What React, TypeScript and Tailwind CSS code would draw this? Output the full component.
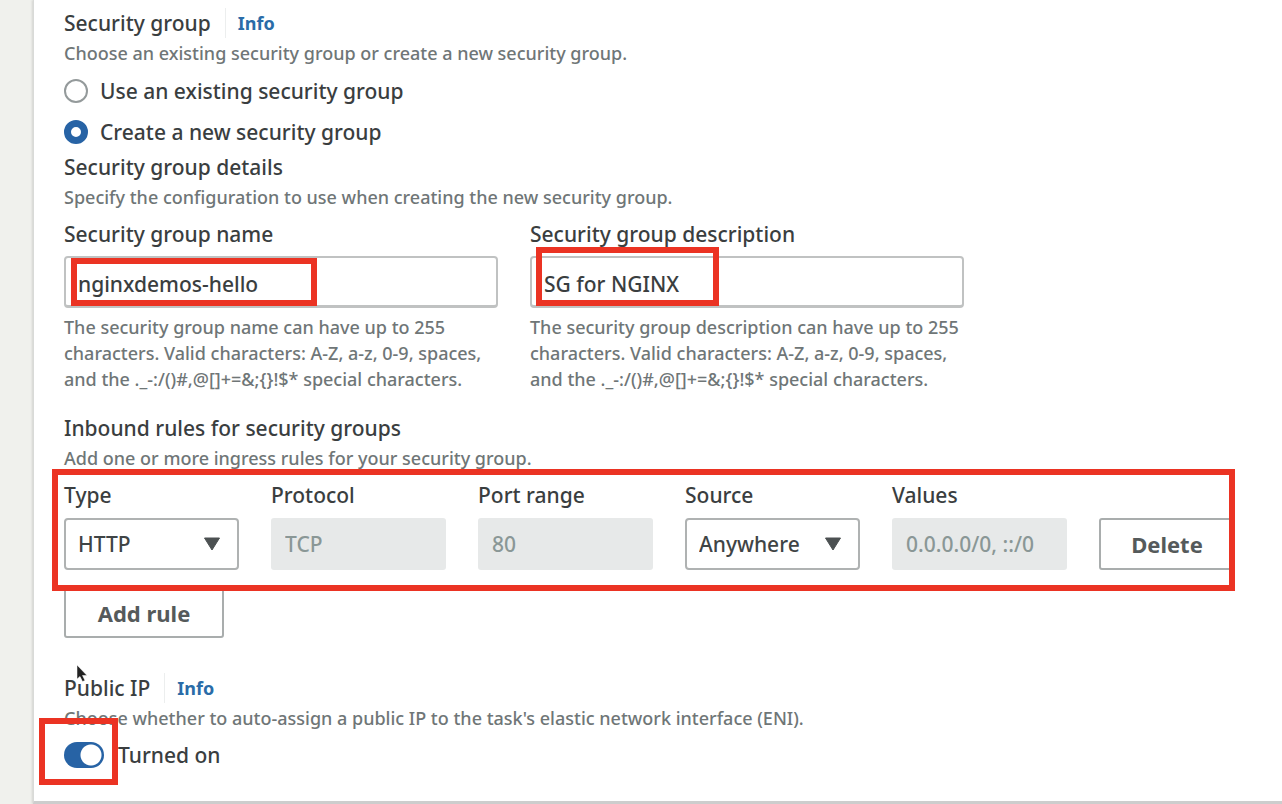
import { ReactNode, useState } from "react";

function Highlight({ className }: { className: string }) {
  return (
    <span
      aria-hidden="true"
      className={`pointer-events-none absolute z-10 border-6 border-[#eb3323] ${className}`}
    />
  );
}

function Hint({ children }: { children: ReactNode }) {
  return <p className="text-[18px] leading-[30px] text-[#6f7677]">{children}</p>;
}

function TitleWithInfo({ children }: { children: ReactNode }) {
  return (
    <div className="flex h-[30px] items-center">
      <h3>{children}</h3>
      <span className="ml-3.5 h-[30px] w-px bg-[#eceeee]" />
      <a href="#info" className="ml-3 text-[18px] font-bold text-[#2a6ca8]">
        Info
      </a>
    </div>
  );
}

function RadioOption({
  label,
  checked,
  onSelect,
}: {
  label: string;
  checked: boolean;
  onSelect: () => void;
}) {
  return (
    <label className="flex h-[30px] items-center gap-3">
      <input
        type="radio"
        name="security-group-mode"
        checked={checked}
        onChange={onSelect}
        className="size-6 shrink-0 appearance-none rounded-full border-2 border-[#949a9b] bg-white checked:border-7 checked:border-[#2763a5]"
      />
      {label}
    </label>
  );
}

function TextField({
  id,
  label,
  value,
  help,
  highlight,
}: {
  id: string;
  label: string;
  value: string;
  help: string;
  highlight: string;
}) {
  return (
    <div>
      <label htmlFor={id} className="block">
        {label}
      </label>
      <div className="relative mt-[7px]">
        <input
          id={id}
          type="text"
          defaultValue={value}
          className="block h-[52px] w-full rounded-[4px] border-2 border-b-3 border-[#c0c2c2] bg-white px-3 pt-1"
        />
        <Highlight className={highlight} />
      </div>
      <p className="mt-1.5 text-[18px] leading-[26px] text-[#6f7677]">
        {help}
        <br />
        characters. Valid characters: A-Z, a-z, 0-9, spaces,
        <br />
        and the ._-:/()#,@[]+=&amp;;{"{}"}!$* special characters.
      </p>
    </div>
  );
}

function RuleSelect({ id, label, options }: { id: string; label: string; options: string[] }) {
  return (
    <div>
      <label htmlFor={id} className="block">
        {label}
      </label>
      <div className="relative mt-2">
        <select
          id={id}
          className="block h-[52px] w-full appearance-none rounded-[4px] border-2 border-[#afb2b2] bg-white px-3 text-[#3f4445]"
        >
          {options.map((o) => (
            <option key={o}>{o}</option>
          ))}
        </select>
        <svg
          viewBox="0 0 18 14"
          className="pointer-events-none absolute top-[19px] right-[18px] h-3.5 w-[18px]"
          aria-hidden="true"
        >
          <path d="M1.5 1h15L9 13Z" fill="#4c5152" stroke="#4c5152" strokeLinejoin="round" />
        </svg>
      </div>
    </div>
  );
}

function RuleDisabled({ id, label, value }: { id: string; label: string; value: string }) {
  return (
    <div>
      <label htmlFor={id} className="block">
        {label}
      </label>
      <input
        id={id}
        type="text"
        disabled
        value={value}
        className="mt-2 block h-[52px] w-full rounded-[3px] bg-[#e7e9e9] px-3.5 text-[#8a9796]"
      />
    </div>
  );
}

export default function App() {
  const [mode, setMode] = useState("new");
  const [publicIp, setPublicIp] = useState(true);

  return (
    <div className="min-h-screen bg-[#f0f1ed] pl-[33px] font-['Noto_Sans',sans-serif] text-[21px] leading-[30px] font-medium text-[#3a3e3f]">
      <main className="border-b-3 border-l border-b-[#cdcdcd] border-l-[#d9dad8] bg-white pt-2 pr-[47px] pb-[31px] pl-[30px] shadow-[-1px_0_2px_#d3d4d0]">
        <section>
          <TitleWithInfo>Security group</TitleWithInfo>
          <Hint>Choose an existing security group or create a new security group.</Hint>
          <div className="mt-2 flex flex-col gap-[11px]">
            <RadioOption
              label="Use an existing security group"
              checked={mode === "existing"}
              onSelect={() => setMode("existing")}
            />
            <RadioOption
              label="Create a new security group"
              checked={mode === "new"}
              onSelect={() => setMode("new")}
            />
          </div>
          <h3 className="mt-[5px]">Security group details</h3>
          <Hint>Specify the configuration to use when creating the new security group.</Hint>
          <div className="mt-[7px] grid max-w-[900px] grid-cols-2 gap-8">
            <TextField
              id="sg-name"
              label="Security group name"
              value="nginxdemos-hello"
              help="The security group name can have up to 255"
              highlight="top-0.5 left-[7px] h-12 w-[246px]"
            />
            <TextField
              id="sg-description"
              label="Security group description"
              value="SG for NGINX"
              help="The security group description can have up to 255"
              highlight="-top-[9px] left-1.5 h-[59px] w-[183px]"
            />
          </div>
        </section>

        <section className="mt-[21px]">
          <h3>Inbound rules for security groups</h3>
          <Hint>Add one or more ingress rules for your security group.</Hint>
          <div className="relative mt-[7px] grid grid-cols-[repeat(5,minmax(0,1fr))_136px] items-end gap-8">
            <RuleSelect id="rule-type" label="Type" options={["HTTP", "HTTPS"]} />
            <RuleDisabled id="rule-protocol" label="Protocol" value="TCP" />
            <RuleDisabled id="rule-port" label="Port range" value="80" />
            <RuleSelect id="rule-source" label="Source" options={["Anywhere", "Custom"]} />
            <RuleDisabled id="rule-values" label="Values" value="0.0.0.0/0, ::/0" />
            <button
              type="button"
              className="h-[52px] rounded-[3px] border-2 border-[#a9adad] bg-white text-[22px] font-bold text-[#555a5b]"
            >
              Delete
            </button>
            <Highlight className="-top-[11px] right-0 -bottom-[21px] -left-3" />
          </div>
          <button
            type="button"
            className="mt-4 block h-[52px] w-40 rounded-[3px] border-2 border-[#a9adad] bg-white pt-0.5 text-[22px] font-bold text-[#555a5b]"
          >
            Add rule
          </button>
        </section>

        <section className="relative mt-[35px]">
          <TitleWithInfo>Public IP</TitleWithInfo>
          <svg
            viewBox="0 0 14 24"
            className="pointer-events-none absolute -top-[9px] left-3 h-6 w-3.5"
            aria-hidden="true"
          >
            <path d="M1 1v14l3-2.500 2.500 5 2.500-1-2.500-5h4.500Z" fill="#222" stroke="#fff" strokeWidth="0.500" />
          </svg>
          <Hint>Choose whether to auto-assign a public IP to the task's elastic network interface (ENI).</Hint>
          <div className="relative mt-[7px] w-fit">
            <label className="flex h-[30px] items-center gap-3.5">
              <input
                type="checkbox"
                role="switch"
                checked={publicIp}
                onChange={(e) => setPublicIp(e.target.checked)}
                className="h-[26px] w-10 shrink-0 appearance-none rounded-full bg-[#8a9092] bg-[radial-gradient(circle_at_13px_13px,#fff_10px,transparent_11px)] checked:bg-[#2763a5] checked:bg-[radial-gradient(circle_at_27px_13px,#fff_10px,transparent_11px)]"
              />
              {publicIp ? "Turned on" : "Turned off"}
            </label>
            <Highlight className="-top-[22px] -left-[25px] h-[67px] w-[79px]" />
          </div>
        </section>
      </main>
    </div>
  );
}
